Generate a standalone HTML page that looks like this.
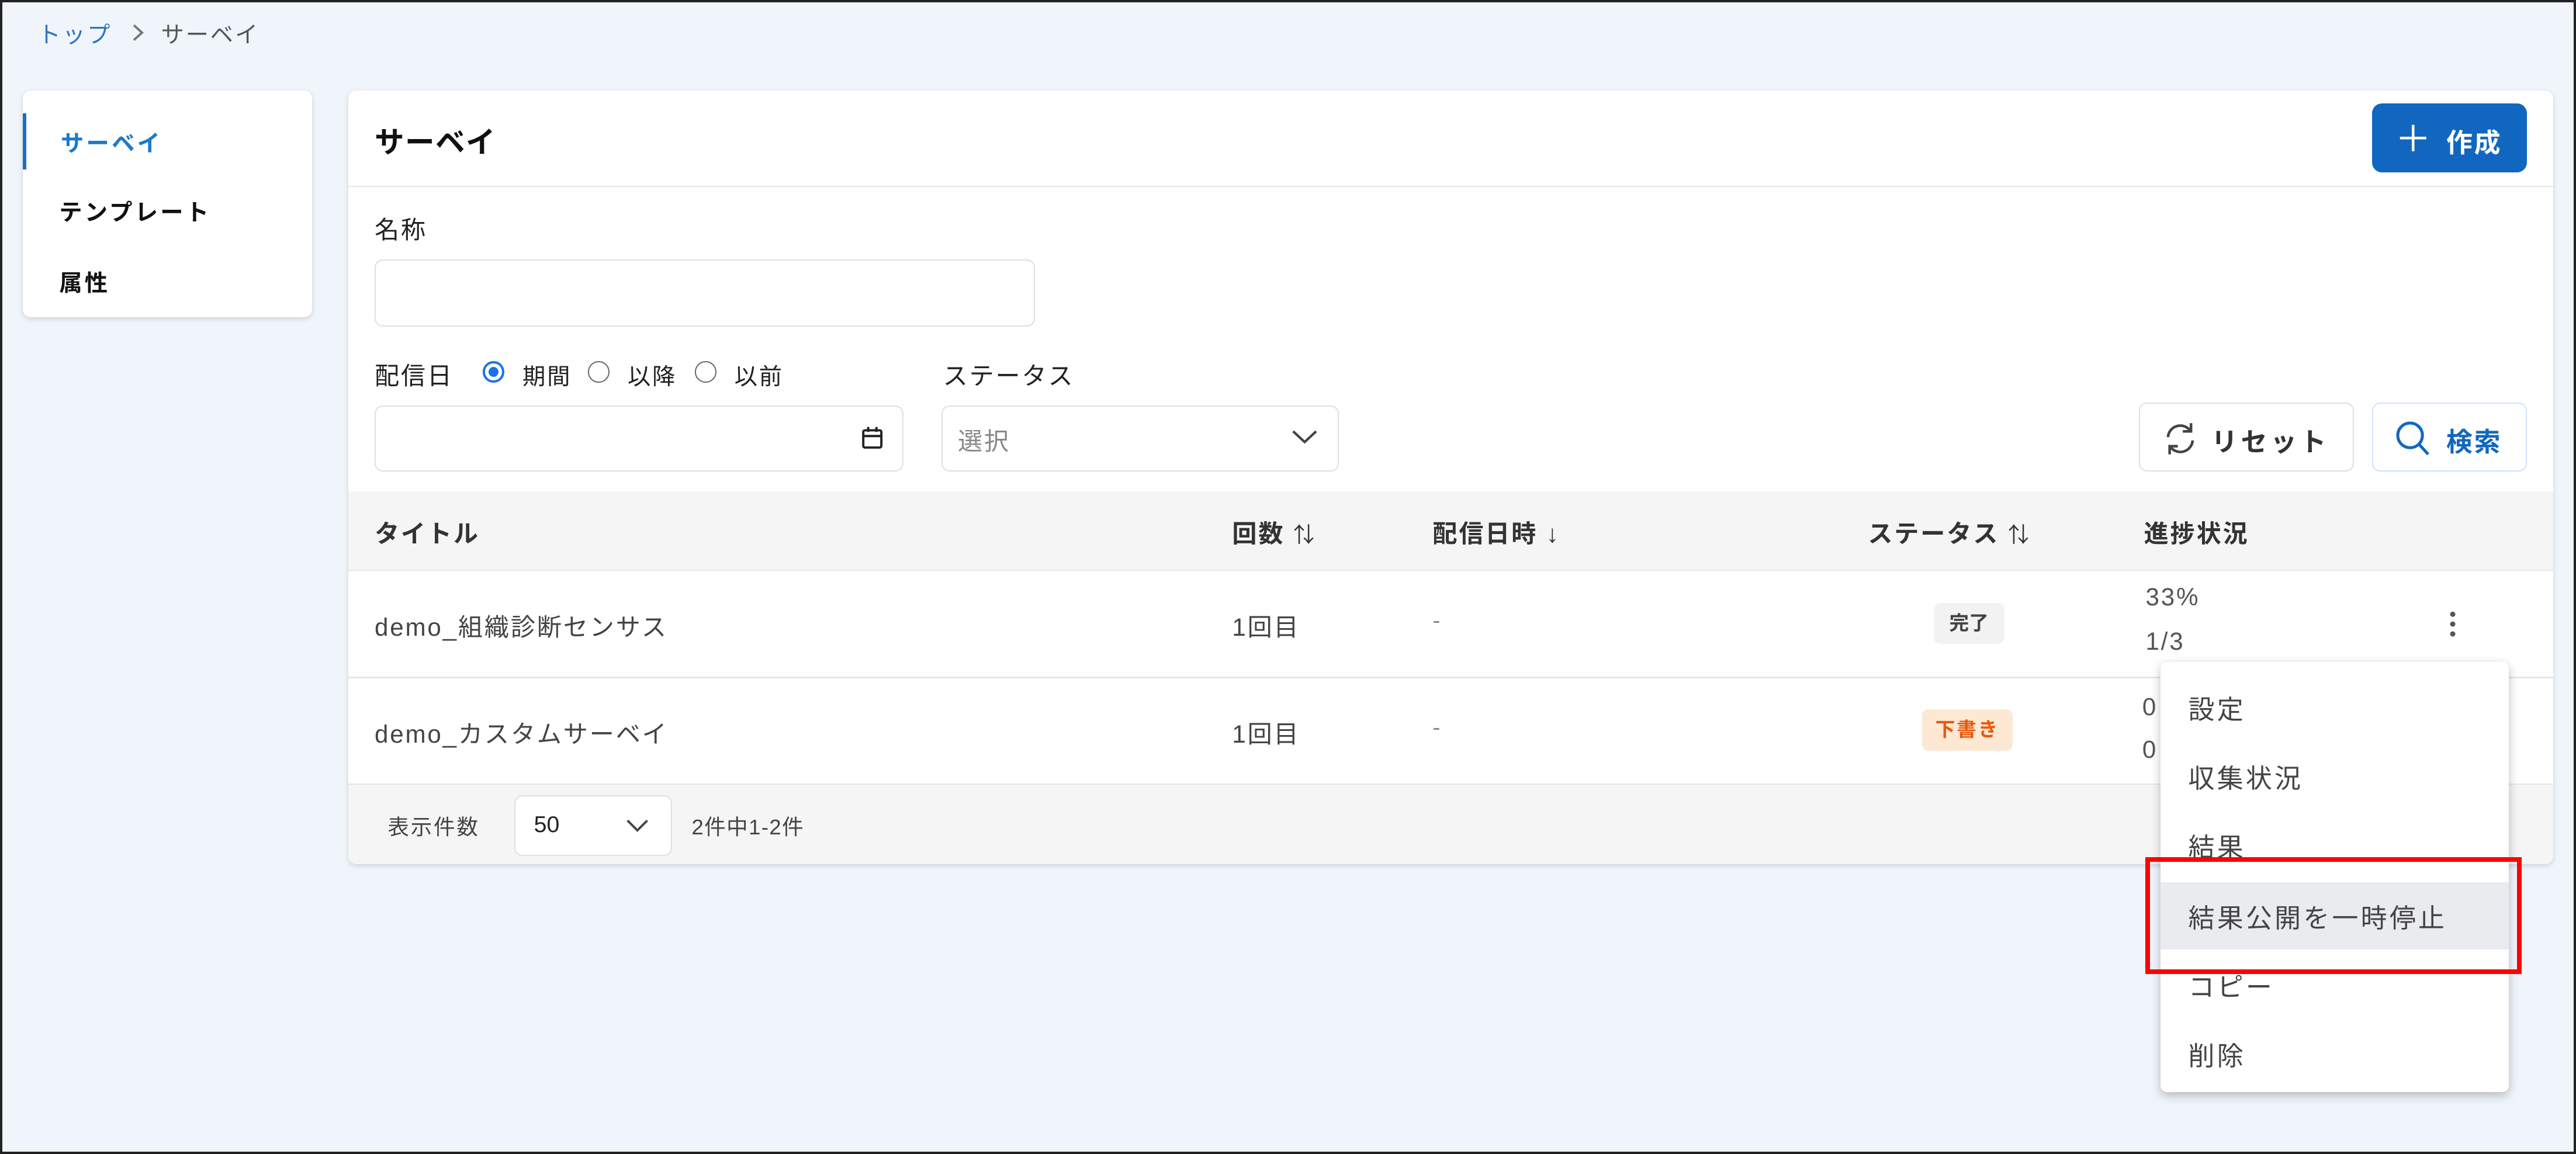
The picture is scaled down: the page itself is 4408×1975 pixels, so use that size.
<!DOCTYPE html>
<html><head><meta charset="utf-8"><style>
html,body{margin:0;padding:0;background:#eff4fc;overflow:hidden}
#w{zoom:2.81122;position:relative;width:1568px;height:702.6px;background:#f0f5fc;font-family:"Liberation Sans","Noto Sans CJK JP",sans-serif;color:#333;box-sizing:border-box;overflow:hidden}
#bd{position:absolute;left:0;top:0;right:0;bottom:0;border:1.5px solid #222;pointer-events:none}
.a{position:absolute;white-space:nowrap}
.card{position:absolute;background:#fff;border-radius:5px;box-shadow:0 1px 3px rgba(0,0,0,.15)}
.inp{position:absolute;background:#fff;border:1px solid #dcdfe4;border-radius:5px;box-sizing:border-box}
.t15{font-size:15px;letter-spacing:1px}
.b{font-weight:bold}
.radio{position:absolute;width:13px;height:13px;border:1px solid #666;border-radius:50%;box-sizing:border-box}
.mi{position:absolute;left:1332px;font-size:16px;letter-spacing:1.5px;color:#444}
</style></head><body><div id="w">
<div class="a" style="left:23px;top:10px;font-size:14px;letter-spacing:1px;color:#2f74c0">トップ</div>
<svg class="a" style="left:79px;top:14px" width="10" height="12"><path d="M2.5 1.5l5 4.5-5 4.5" fill="none" stroke="#777" stroke-width="1.4"/></svg>
<div class="a" style="left:98px;top:10px;font-size:14px;letter-spacing:1px;color:#555">サーベイ</div>

<div class="card" style="left:14px;top:55px;width:176px;height:138px"></div>
<div class="a" style="left:14px;top:69px;width:2px;height:34px;background:#1b6ec2"></div>
<div class="a b" style="left:37px;top:76px;font-size:14px;letter-spacing:1.5px;color:#1b7ac7">サーベイ</div>
<div class="a b" style="left:36px;top:118px;font-size:14px;letter-spacing:1.5px;color:#111">テンプレート</div>
<div class="a b" style="left:36px;top:161px;font-size:14px;letter-spacing:1.5px;color:#111">属性</div>

<div class="card" style="left:212px;top:55px;width:1342px;height:471px;overflow:hidden">
  <div style="position:absolute;left:0;top:58px;width:100%;height:1px;background:#e3e5e8"></div>
  <div style="position:absolute;left:0;top:244px;width:100%;height:48px;background:#f5f5f5;border-bottom:1px solid #e6e6e6"></div>
  <div style="position:absolute;left:0;top:357px;width:100%;height:1px;background:#e6e6e6"></div>
  <div style="position:absolute;left:0;top:422px;width:100%;height:49px;background:#f5f5f5;border-top:1px solid #e6e6e6"></div>
</div>
<div class="a b" style="left:228px;top:72px;font-size:18px;color:#111;letter-spacing:.5px">サーベイ</div>
<div class="a" style="left:1444px;top:63px;width:94px;height:42px;background:#1167c0;border-radius:6px"></div>
<svg class="a" style="left:1460px;top:75px" width="18" height="18"><path d="M9 1v16M1 9h16" stroke="#fff" stroke-width="1.6"/></svg>
<div class="a b" style="left:1489px;top:74px;font-size:16px;color:#fff;letter-spacing:1px">作成</div>

<div class="a t15" style="left:228px;top:128px;color:#222">名称</div>
<div class="inp" style="left:228px;top:158px;width:402px;height:41px"></div>
<div class="a t15" style="left:228px;top:217px;color:#222">配信日</div>
<div class="radio" style="left:294px;top:220px;border:1.5px solid #1a73e8"><div style="position:absolute;left:2px;top:2px;width:6px;height:6px;border-radius:50%;background:#1a73e8"></div></div>
<div class="a" style="left:318px;top:218px;font-size:14px;letter-spacing:1px;color:#222">期間</div>
<div class="radio" style="left:358px;top:220px"></div>
<div class="a" style="left:382px;top:218px;font-size:14px;letter-spacing:1px;color:#222">以降</div>
<div class="radio" style="left:423px;top:220px"></div>
<div class="a" style="left:447px;top:218px;font-size:14px;letter-spacing:1px;color:#222">以前</div>
<div class="a t15" style="left:574px;top:217px;color:#222">ステータス</div>
<div class="inp" style="left:228px;top:247px;width:322px;height:40px"></div>
<svg class="a" style="left:524px;top:259px" width="14" height="15"><rect x="1.5" y="3" width="11" height="10.5" rx="1" fill="none" stroke="#222" stroke-width="1.4"/><path d="M1.5 6.5h11M4.5 1v3M9.5 1v3" stroke="#222" stroke-width="1.4"/></svg>
<div class="inp" style="left:573px;top:247px;width:242px;height:40px"></div>
<div class="a" style="left:583px;top:257px;font-size:15px;color:#888;letter-spacing:1px">選択</div>
<svg class="a" style="left:786px;top:261px" width="16" height="10"><path d="M1 1.5l7 6.5 7-6.5" fill="none" stroke="#444" stroke-width="1.5"/></svg>
<div class="inp" style="left:1302px;top:245px;width:131px;height:42px"></div>
<svg class="a" style="left:1316px;top:256px" width="22" height="22" viewBox="0 0 22 22"><path d="M3.5 10a7.5 7.5 0 0 1 13.5-4M18.5 12a7.5 7.5 0 0 1-13.5 4" fill="none" stroke="#444" stroke-width="1.6"/><path d="M17.5 1.5v5h-5M4.5 20.5v-5h5" fill="none" stroke="#444" stroke-width="1.6"/></svg>
<div class="a b" style="left:1346px;top:256px;font-size:16px;color:#333;letter-spacing:2px">リセット</div>
<div class="inp" style="left:1444px;top:245px;width:94px;height:42px;border-color:#cfe2fa"></div>
<svg class="a" style="left:1457px;top:255px" width="24" height="24"><circle cx="10" cy="10" r="7.5" fill="none" stroke="#1167c0" stroke-width="1.8"/><path d="M15.5 15.5l5.5 6" stroke="#1167c0" stroke-width="1.8"/></svg>
<div class="a b" style="left:1489px;top:256px;font-size:16px;color:#1167c0;letter-spacing:1px">検索</div>

<div class="a b t15" style="left:228px;top:313px;color:#333">タイトル</div>
<div class="a b t15" style="left:750px;top:313px;color:#333">回数 <span style="font-weight:normal;font-size:13px">⇅</span></div>
<div class="a b t15" style="left:872px;top:313px;color:#333">配信日時 <span style="font-weight:normal">↓</span></div>
<div class="a b t15" style="left:1137px;top:313px;color:#333">ステータス <span style="font-weight:normal;font-size:13px">⇅</span></div>
<div class="a b t15" style="left:1305px;top:313px;color:#333">進捗状況</div>

<div class="a t15" style="left:228px;top:370px;color:#444">demo_組織診断センサス</div>
<div class="a t15" style="left:750px;top:370px;color:#444">1回目</div>
<div class="a" style="left:872px;top:370px;color:#888;font-size:14px">-</div>
<div class="a b" style="left:1177px;top:367px;width:43px;height:25px;background:#f2f2f2;border-radius:4px;font-size:12px;color:#444;text-align:center;line-height:25px">完了</div>
<div class="a t15" style="left:1306px;top:355px;color:#555">33%</div>
<div class="a t15" style="left:1306px;top:382px;color:#555">1/3</div>
<svg class="a" style="left:1488px;top:370px" width="10" height="20"><circle cx="5" cy="4" r="1.6" fill="#555"/><circle cx="5" cy="10" r="1.6" fill="#555"/><circle cx="5" cy="16" r="1.6" fill="#555"/></svg>

<div class="a t15" style="left:228px;top:435px;color:#444">demo_カスタムサーベイ</div>
<div class="a t15" style="left:750px;top:435px;color:#444">1回目</div>
<div class="a" style="left:872px;top:435px;color:#888;font-size:14px">-</div>
<div class="a b" style="left:1170px;top:432px;width:55px;height:25px;background:#fde8d4;border-radius:4px;font-size:12px;color:#e8590c;text-align:center;line-height:25px;letter-spacing:1px">下書き</div>
<div class="a t15" style="left:1304px;top:422px;color:#555">0</div>
<div class="a t15" style="left:1304px;top:448px;color:#555">0</div>

<div class="a" style="left:236px;top:493px;font-size:13px;letter-spacing:1px;color:#444">表示件数</div>
<div class="inp" style="left:313px;top:484px;width:96px;height:37px"></div>
<div class="a" style="left:325px;top:494px;font-size:14px;color:#222">50</div>
<svg class="a" style="left:381px;top:498px" width="14" height="9"><path d="M1 1.5l6 6 6-6" fill="none" stroke="#444" stroke-width="1.4"/></svg>
<div class="a" style="left:421px;top:493px;font-size:13px;letter-spacing:.5px;color:#444">2件中1-2件</div>

<div class="a" style="left:1315px;top:403px;width:212px;height:262px;background:#fff;border-radius:4px;box-shadow:0 2px 6px rgba(0,0,0,.25)"></div>
<div class="a" style="left:1315px;top:537px;width:212px;height:41px;background:#e9ebee"></div>
<div class="mi" style="top:419px">設定</div>
<div class="mi" style="top:461px">収集状況</div>
<div class="mi" style="top:503px">結果</div>
<div class="mi" style="top:546px">結果公開を一時停止</div>
<div class="mi" style="top:588px">コピー</div>
<div class="mi" style="top:630px">削除</div>
<div class="a" style="left:1306px;top:522px;width:229px;height:71px;border:3px solid #f00;box-sizing:border-box"></div>
<div id="bd"></div>
</div></body></html>
